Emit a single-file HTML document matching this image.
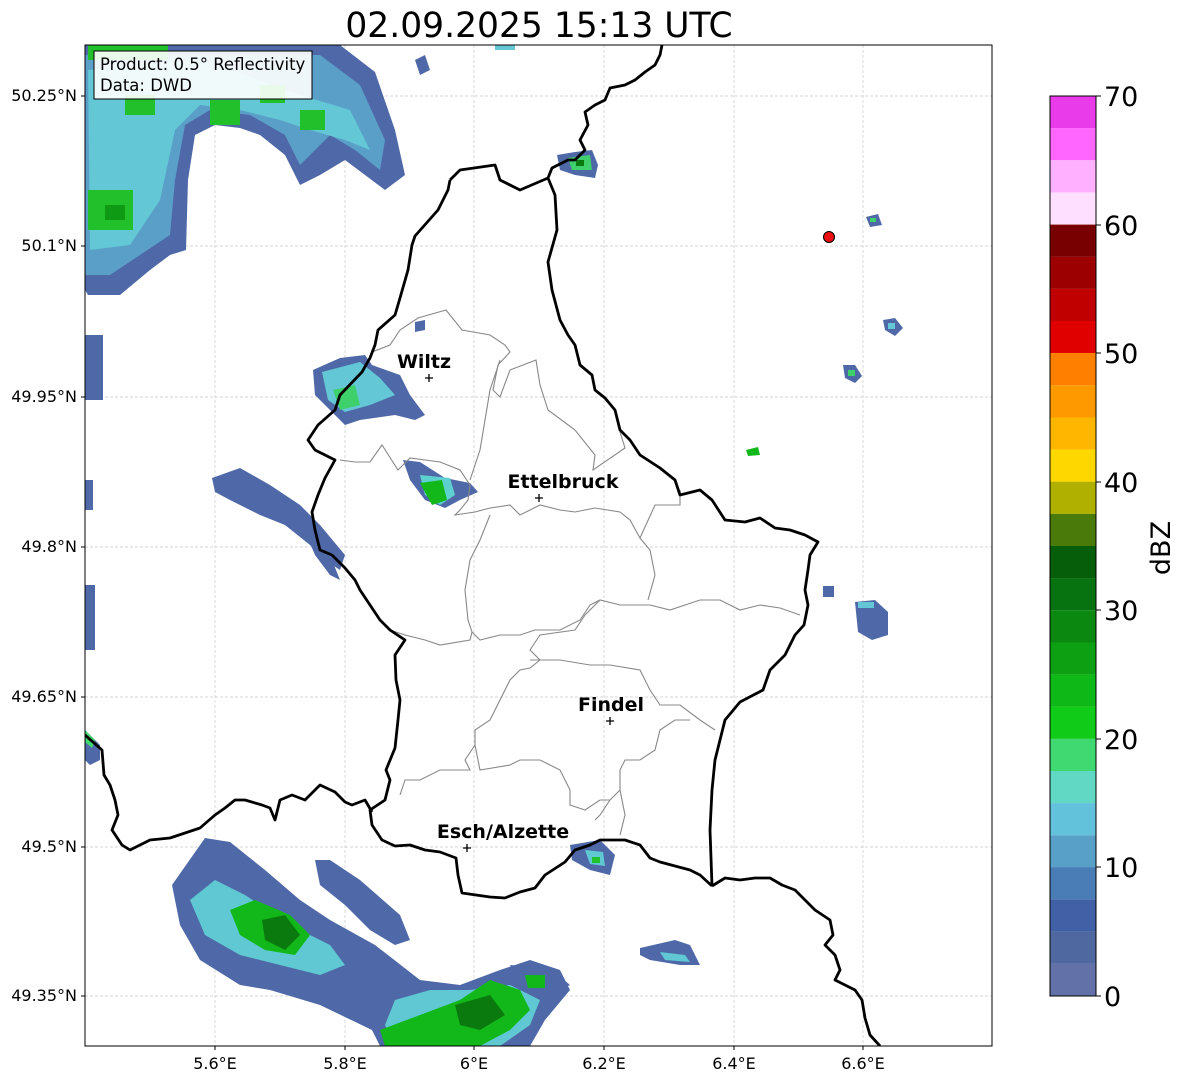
<!DOCTYPE html>
<html><head><meta charset="utf-8"><style>
html,body{margin:0;padding:0;background:#fff;}
body{width:1184px;height:1081px;overflow:hidden;font-family:"DejaVu Sans","Liberation Sans",sans-serif;}
</style></head><body>
<svg width="1184" height="1081" viewBox="0 0 1184 1081" xmlns="http://www.w3.org/2000/svg" font-family="DejaVu Sans, Liberation Sans, sans-serif">
<rect width="1184" height="1081" fill="#fff"/>
<text x="539" y="37" font-size="34.5" text-anchor="middle" fill="#000">02.09.2025 15:13 UTC</text>
<defs><clipPath id="mc"><rect x="85" y="45" width="907" height="1001"/></clipPath></defs>
<g clip-path="url(#mc)">
<g stroke="#c8c8c8" stroke-width="0.7" stroke-dasharray="3,2">
<line x1="215" y1="45" x2="215" y2="1046"/><line x1="345" y1="45" x2="345" y2="1046"/><line x1="474" y1="45" x2="474" y2="1046"/><line x1="604" y1="45" x2="604" y2="1046"/><line x1="734" y1="45" x2="734" y2="1046"/><line x1="863" y1="45" x2="863" y2="1046"/>
<line x1="85" y1="96" x2="992" y2="96"/><line x1="85" y1="246" x2="992" y2="246"/><line x1="85" y1="397" x2="992" y2="397"/><line x1="85" y1="547" x2="992" y2="547"/><line x1="85" y1="697" x2="992" y2="697"/><line x1="85" y1="847" x2="992" y2="847"/><line x1="85" y1="996" x2="992" y2="996"/>
</g>
<path d="M85,45 L340,45 L375,72 L395,130 L405,175 L385,190 L365,175 L345,160 L320,175 L300,185 L285,155 L260,135 L240,128 L215,125 L195,135 L188,180 L186,250 L170,255 L150,270 L120,295 L88,295 L85,290Z" fill="#4f69a8"/>
<path d="M85,55 L320,55 L360,85 L385,140 L380,170 L355,150 L330,135 L300,165 L285,135 L250,115 L210,110 L185,125 L175,180 L170,235 L140,255 L110,275 L85,275Z" fill="#5a9fc8"/>
<path d="M88,70 L200,60 L260,80 L300,95 L350,110 L370,150 L345,140 L310,130 L280,120 L240,110 L200,105 L175,130 L160,200 L130,245 L90,250Z" fill="#63c7d6"/>
<g fill="#22c02a"><rect x="88" y="190" width="45" height="40"/><rect x="210" y="100" width="30" height="25"/><rect x="300" y="110" width="25" height="20"/><rect x="125" y="95" width="30" height="20"/><rect x="260" y="85" width="25" height="18"/><rect x="88" y="45" width="80" height="15"/></g>
<g fill="#0f9a14"><rect x="105" y="205" width="20" height="15"/></g>
<rect x="85" y="335" width="18" height="65" fill="#4f69a8"/><rect x="85" y="480" width="8" height="30" fill="#4f69a8"/><rect x="85" y="585" width="10" height="65" fill="#4f69a8"/>
<path d="M85,730 L100,745 L100,760 L90,765 L85,760Z" fill="#4f69a8"/><path d="M85,730 L95,740 L92,748 L85,742Z" fill="#40d870"/>
<path d="M313,370 L340,358 L365,355 L372,365 L400,375 L410,395 L425,415 L415,420 L395,415 L360,420 L345,425 L330,410 L315,395Z" fill="#4f69a8"/>
<path d="M322,372 L360,362 L380,378 L395,395 L370,405 L345,412 L328,400Z" fill="#63c7d6"/>
<path d="M333,390 L355,385 L360,405 L340,410Z" fill="#3ed06a"/>
<path d="M403,460 L420,462 L445,478 L470,483 L478,492 L460,500 L445,508 L425,500 L410,480Z" fill="#4f69a8"/>
<path d="M420,475 L450,478 L455,495 L440,505 L425,495Z" fill="#5fd0d0"/>
<path d="M420,483 L442,480 L447,500 L432,505Z" fill="#12b81a"/>
<path d="M212,478 L240,468 L270,485 L300,505 L320,525 L345,555 L340,570 L325,560 L310,545 L285,525 L260,515 L230,500 L215,492Z" fill="#4f69a8"/>
<path d="M300,520 L320,530 L330,555 L340,580 L330,575 L315,555Z" fill="#4f69a8"/>
<path d="M172,885 L205,838 L230,842 L265,870 L300,900 L330,920 L375,945 L420,980 L460,985 L500,970 L530,960 L560,970 L570,990 L545,1020 L530,1046 L380,1046 L372,1030 L320,1005 L270,990 L240,985 L200,960 L180,925Z" fill="#4f69a8"/>
<path d="M315,860 L330,860 L360,880 L400,915 L410,940 L395,945 L370,930 L345,905 L320,885Z" fill="#4f69a8"/>
<path d="M190,900 L215,880 L245,895 L290,925 L330,945 L345,965 L320,975 L280,965 L240,955 L205,935Z" fill="#5fc8d2"/>
<path d="M395,1000 L430,990 L470,990 L510,985 L540,1000 L530,1025 L500,1046 L395,1046 L385,1025Z" fill="#5fc8d2"/>
<path d="M230,910 L255,900 L290,915 L310,935 L295,955 L265,950 L240,935Z" fill="#12b81a"/>
<path d="M262,920 L285,915 L300,935 L285,950 L265,940Z" fill="#0a7a0e"/>
<path d="M380,1030 L420,1015 L460,1000 L490,980 L520,990 L530,1010 L510,1030 L480,1046 L385,1046Z" fill="#12b81a"/>
<path d="M455,1005 L490,995 L505,1015 L480,1030 L460,1025Z" fill="#0a7a0e"/>
<path d="M510,965 L550,968 L570,985 L550,995 L520,985Z" fill="#4f69a8"/><path d="M525,975 L545,975 L545,988 L528,988Z" fill="#12b81a"/>
<path d="M570,845 L600,840 L615,855 L610,875 L590,870 L572,860Z" fill="#4f69a8"/><path d="M585,850 L603,852 L605,866 L590,864Z" fill="#5fc8d2"/><rect x="592" y="857" width="8" height="6" fill="#22c02a"/>
<path d="M640,948 L675,940 L690,945 L700,965 L680,965 L650,960 L640,955Z" fill="#4f69a8"/><path d="M660,952 L685,955 L690,962 L665,960Z" fill="#5fc8d2"/>
<path d="M557,155 L575,152 L592,150 L598,165 L595,178 L575,175 L560,170Z" fill="#4f69a8"/><path d="M568,158 L590,155 L592,170 L572,170Z" fill="#3ed06a"/><rect x="576" y="160" width="8" height="6" fill="#0a7a0e"/>
<path d="M855,602 L875,600 L888,612 L888,635 L872,640 L858,632Z" fill="#4f69a8"/><rect x="858" y="602" width="16" height="6" fill="#63c7d6"/>
<rect x="823" y="586" width="11" height="11" fill="#4f69a8"/>
<path d="M746,450 L758,447 L760,455 L748,456Z" fill="#12b81a"/>
<path d="M843,365 L855,365 L862,376 L855,383 L845,378Z" fill="#4f69a8"/><rect x="848" y="370" width="7" height="6" fill="#3ed06a"/>
<path d="M883,320 L895,318 L903,328 L895,336 L885,330Z" fill="#4f69a8"/><rect x="888" y="323" width="7" height="6" fill="#63c7d6"/>
<path d="M866,217 L878,214 L882,225 L870,227Z" fill="#4f69a8"/><rect x="870" y="218" width="6" height="4" fill="#3ed06a"/>
<path d="M415,60 L425,55 L430,70 L420,75Z" fill="#4f69a8"/><rect x="495" y="45" width="20" height="5" fill="#63c7d6"/>
<path d="M415,322 L425,320 L425,330 L415,332Z" fill="#4f69a8"/>
<g fill="none" stroke="#888" stroke-width="1.1">
<path d="M372,352 L390,345 L400,330 L418,318 L446,310 L462,330 L490,335 L505,345 L510,352 L498,365 L493,390 L500,397 L510,370 L536,360 L540,385 L548,410 L575,430 L595,455 L593,470 L625,448 L620,432"/>
<path d="M340,460 L355,462 L370,462 L382,445 L398,470 L410,458 L440,462 L460,470 L470,485 L468,500 L460,510 L455,515 L475,512 L490,508 L510,505 L520,515 L540,505 L560,510 L575,512 L595,508 L620,512 L630,520 L640,538 L655,505 L680,505 L680,490"/>
<path d="M500,360 L490,390 L485,420 L480,450 L470,480"/>
<path d="M490,515 L480,540 L470,560 L465,590 L468,620 L472,632 L470,640 L440,645 L425,640 L405,635 L390,630"/>
<path d="M472,632 L480,640 L500,635 L520,635 L535,630 L560,630 L580,620 L590,605 L600,600 L620,605 L650,605 L670,610 L700,600 L720,600 L740,610 L760,605 L780,608 L800,615"/>
<path d="M640,538 L650,550 L655,575 L648,600"/>
<path d="M600,600 L585,615 L575,630 L540,635 L530,650 L540,660 L530,668 L520,670 L510,680 L500,700 L490,720 L475,730 L475,745 L465,760 L470,770 L440,770 L420,780 L405,780 L400,795"/>
<path d="M530,660 L560,660 L590,665 L610,665 L640,670 L650,690 L660,705 L680,705 L700,720 L715,730"/>
<path d="M475,745 L480,770 L510,765 L520,760 L540,760 L560,770 L570,790 L570,805 L585,810 L600,800 L610,800 L620,790 L620,770 L625,760 L640,760 L655,750 L660,730 L675,720 L690,720"/>
<path d="M620,790 L625,815 L620,835"/>
<path d="M610,800 L600,815 L595,820"/>
</g>
<g fill="none" stroke="#000" stroke-width="2.8" stroke-linejoin="round">
<path d="M450,180 L460,170 L495,165 L500,180 L520,190 L548,178 L555,195 L557,230 L548,262 L552,290 L560,320 L568,335 L575,345 L580,365 L592,375 L595,390 L605,398 L615,410 L620,430 L630,440 L640,455 L660,468 L675,480 L680,495 L700,490 L712,500 L725,520 L745,522 L760,518 L775,528 L790,530 L805,535 L818,542 L810,555 L808,570 L805,590 L808,605 L804,625 L795,635 L785,655 L770,670 L763,690 L740,702 L725,720 L720,740 L715,760 L712,790 L710,830 L712,886"/>
<path d="M712,886 L700,875 L690,870 L660,862 L650,858 L640,845 L625,840 L600,840 L590,845 L575,850 L565,862 L545,875 L535,888 L520,892 L505,898 L490,897 L462,893 L458,875 L456,858 L440,852 L425,850 L410,845 L395,846 L382,840 L372,825 L370,810 L385,800 L390,780 L386,770 L395,748 L398,720 L400,700 L396,680 L395,655 L405,640 L390,630 L380,620 L370,605 L360,590 L355,580 L345,568 L332,555 L320,550 L315,530 L312,512 L318,495 L325,478 L335,460 L315,450 L308,440 L318,425 L335,410 L340,395 L362,372 L370,358 L375,345 L378,330 L395,315 L400,298 L408,270 L412,245 L415,236 L438,210 L448,190 L450,180"/>
<path d="M85,735 L102,750 L104,775 L110,785 L115,800 L118,815 L112,830 L122,845 L130,850 L150,840 L170,838 L185,833 L200,828 L215,815 L225,808 L235,800 L245,800 L262,805 L270,808 L275,820 L280,800 L292,795 L305,800 L315,790 L320,785 L335,792 L345,802 L352,805 L365,800 L372,812"/>
<path d="M712,886 L725,878 L740,880 L755,878 L770,878 L782,885 L795,890 L805,900 L815,910 L830,920 L833,935 L825,945 L835,955 L840,970 L835,980 L855,990 L862,1000 L865,1018 L870,1035 L880,1046"/>
<path d="M548,178 L552,168 L568,160 L575,160 L585,150 L580,140 L588,125 L585,112 L595,105 L605,100 L610,88 L625,85 L635,80 L645,72 L655,65 L660,55 L662,45"/>
</g>
</g>
<rect x="85" y="45" width="907" height="1001" fill="none" stroke="#000" stroke-width="1"/>
<circle cx="829" cy="237" r="5.5" fill="#e81010" stroke="#000" stroke-width="1"/>
<g font-size="19" font-weight="bold" text-anchor="middle" fill="#000">
<text x="424" y="368">Wiltz</text><text x="563" y="488">Ettelbruck</text><text x="611" y="711">Findel</text><text x="503" y="838">Esch/Alzette</text>
</g>
<g stroke="#000" stroke-width="1.3">
<path d="M425,378h8M429,374v8"/><path d="M535,498h8M539,494v8"/><path d="M606,721h8M610,717v8"/><path d="M463,848h8M467,844v8"/>
</g>
<rect x="94" y="51" width="218" height="48" fill="#fff" fill-opacity="0.9" stroke="#000" stroke-width="1"/>
<text x="100" y="70" font-size="16.5">Product: 0.5° Reflectivity</text>
<text x="100" y="91" font-size="16.5">Data: DWD</text>
<g font-size="16" text-anchor="end">
<text x="77" y="101">50.25°N</text><text x="77" y="251">50.1°N</text><text x="77" y="402">49.95°N</text><text x="77" y="552">49.8°N</text><text x="77" y="702">49.65°N</text><text x="77" y="852">49.5°N</text><text x="77" y="1001">49.35°N</text>
</g>
<g font-size="16" text-anchor="middle">
<text x="215" y="1069">5.6°E</text><text x="345" y="1069">5.8°E</text><text x="474" y="1069">6°E</text><text x="604" y="1069">6.2°E</text><text x="734" y="1069">6.4°E</text><text x="863" y="1069">6.6°E</text>
</g>
<g stroke="#000"><path d="M215,1046v4M345,1046v4M474,1046v4M604,1046v4M734,1046v4M863,1046v4M85,96h-4M85,246h-4M85,397h-4M85,547h-4M85,697h-4M85,847h-4M85,996h-4"/></g>
<g>
<rect x="1050" y="96.0" width="46" height="32.2" fill="#e93be9"/>
<rect x="1050" y="128.1" width="46" height="32.2" fill="#ff66ff"/>
<rect x="1050" y="160.3" width="46" height="32.2" fill="#ffb0ff"/>
<rect x="1050" y="192.4" width="46" height="32.2" fill="#ffdfff"/>
<rect x="1050" y="224.6" width="46" height="32.2" fill="#780000"/>
<rect x="1050" y="256.7" width="46" height="32.2" fill="#9c0000"/>
<rect x="1050" y="288.9" width="46" height="32.2" fill="#c00000"/>
<rect x="1050" y="321.0" width="46" height="32.2" fill="#e00000"/>
<rect x="1050" y="353.1" width="46" height="32.2" fill="#ff7f00"/>
<rect x="1050" y="385.3" width="46" height="32.2" fill="#ff9900"/>
<rect x="1050" y="417.4" width="46" height="32.2" fill="#ffb600"/>
<rect x="1050" y="449.6" width="46" height="32.2" fill="#ffd700"/>
<rect x="1050" y="481.7" width="46" height="32.2" fill="#b0b000"/>
<rect x="1050" y="513.9" width="46" height="32.2" fill="#4a7a0a"/>
<rect x="1050" y="546.0" width="46" height="32.2" fill="#065e0a"/>
<rect x="1050" y="578.1" width="46" height="32.2" fill="#077310"/>
<rect x="1050" y="610.3" width="46" height="32.2" fill="#0a8810"/>
<rect x="1050" y="642.4" width="46" height="32.2" fill="#0ca012"/>
<rect x="1050" y="674.6" width="46" height="32.2" fill="#0eb816"/>
<rect x="1050" y="706.7" width="46" height="32.2" fill="#10cc18"/>
<rect x="1050" y="738.9" width="46" height="32.2" fill="#40d870"/>
<rect x="1050" y="771.0" width="46" height="32.2" fill="#60d8c4"/>
<rect x="1050" y="803.1" width="46" height="32.2" fill="#62c2dc"/>
<rect x="1050" y="835.3" width="46" height="32.2" fill="#58a0c8"/>
<rect x="1050" y="867.4" width="46" height="32.2" fill="#4a7cb6"/>
<rect x="1050" y="899.6" width="46" height="32.2" fill="#4160a6"/>
<rect x="1050" y="931.7" width="46" height="32.2" fill="#5068a0"/>
<rect x="1050" y="963.9" width="46" height="32.1" fill="#6272a8"/>
<rect x="1050" y="96" width="46" height="900" fill="none" stroke="#000" stroke-width="1"/>
<path d="M1096,96h5M1096,225h5M1096,353h5M1096,482h5M1096,610h5M1096,739h5M1096,867h5M1096,996h5" stroke="#000"/>
</g>
<g font-size="27">
<text x="1104" y="106">70</text><text x="1104" y="235">60</text><text x="1104" y="363">50</text><text x="1104" y="492">40</text><text x="1104" y="620">30</text><text x="1104" y="749">20</text><text x="1104" y="877">10</text><text x="1104" y="1006">0</text>
</g>
<text transform="translate(1170,548) rotate(-90)" font-size="27" text-anchor="middle">dBZ</text>
</svg>
</body></html>
